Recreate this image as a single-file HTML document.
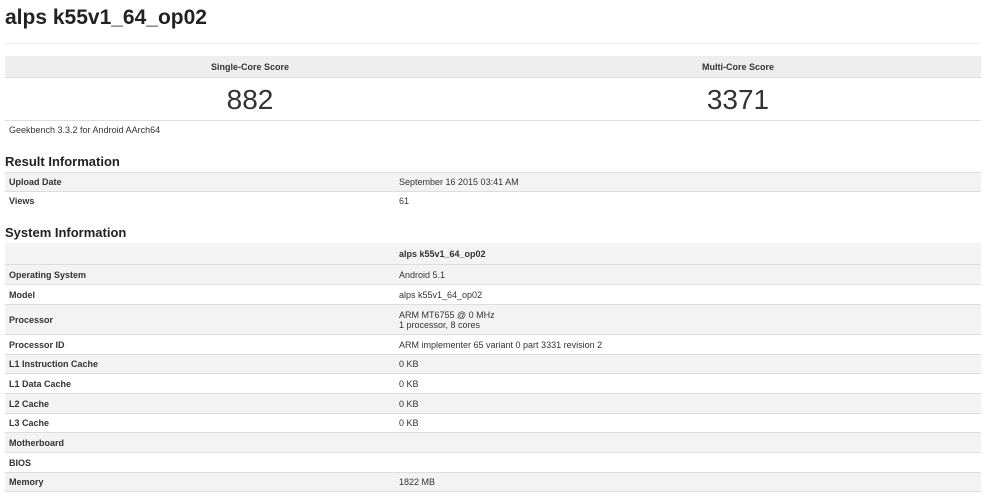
<!DOCTYPE html>
<html><head><style>
*{margin:0;padding:0;box-sizing:border-box}
body{width:1000px;height:496px;background:#fff;font-family:"Liberation Sans",Arial,sans-serif;color:#333;position:relative;overflow:hidden}
.a{position:absolute}
.h1{left:5px;top:6px;font-size:21px;font-weight:bold;color:#222}
.hr{left:5px;top:43px;width:976px;height:1px;background:#eee}
.sh{top:56px;height:22px;background:#eee;font-size:9px;font-weight:bold;line-height:22px;text-align:center;border-bottom:1px solid #ddd}
.num{top:83px;font-size:28px;text-align:center;color:#333;line-height:34px}
.h2{left:5px;font-size:13px;font-weight:bold;color:#222}
.row{left:5px;width:976px;border-top:1px solid #ddd;font-size:9px}
.row span{position:absolute;top:50%;transform:translateY(-50%)}
.k{left:4px;font-weight:bold}
.v{left:394px;line-height:10px}
.g{background:#f3f3f3}
</style></head><body>
<div class="a h1">alps k55v1_64_op02</div>
<div class="a hr"></div>
<div class="a sh" style="left:5px;width:490px">Single-Core Score</div>
<div class="a sh" style="left:495px;width:486px">Multi-Core Score</div>
<div class="a num" style="left:5px;width:490px">882</div>
<div class="a num" style="left:495px;width:486px">3371</div>
<div class="a" style="left:5px;top:120px;width:976px;height:1px;background:#ddd"></div>
<div class="a" style="left:9px;top:125px;font-size:9px">Geekbench 3.3.2 for Android AArch64</div>
<div class="a h2" style="top:154px">Result Information</div>
<div class="a row g" style="top:172px;height:19px"><span class="k">Upload Date</span><span class="v">September 16 2015 03:41 AM</span></div>
<div class="a row" style="top:191px;height:19px"><span class="k">Views</span><span class="v">61</span></div>
<div class="a h2" style="top:225px">System Information</div>
<div class="a row g" style="top:243px;height:21px;border-top:none"><span class="v" style="font-weight:bold">alps k55v1_64_op02</span></div>
<div class="a row g" style="top:264px;height:20px"><span class="k">Operating System</span><span class="v">Android 5.1</span></div>
<div class="a row" style="top:284px;height:20px"><span class="k">Model</span><span class="v">alps k55v1_64_op02</span></div>
<div class="a row g" style="top:304px;height:30px"><span class="k">Processor</span><span class="v">ARM MT6755 @ 0 MHz<br>1 processor, 8 cores</span></div>
<div class="a row" style="top:334px;height:20px"><span class="k">Processor ID</span><span class="v">ARM implementer 65 variant 0 part 3331 revision 2</span></div>
<div class="a row g" style="top:354px;height:19px"><span class="k">L1 Instruction Cache</span><span class="v">0 KB</span></div>
<div class="a row" style="top:373px;height:20px"><span class="k">L1 Data Cache</span><span class="v">0 KB</span></div>
<div class="a row g" style="top:393px;height:20px"><span class="k">L2 Cache</span><span class="v">0 KB</span></div>
<div class="a row" style="top:413px;height:19px"><span class="k">L3 Cache</span><span class="v">0 KB</span></div>
<div class="a row g" style="top:432px;height:20px"><span class="k">Motherboard</span></div>
<div class="a row" style="top:452px;height:20px"><span class="k">BIOS</span></div>
<div class="a row g" style="top:472px;height:20px;border-bottom:1px solid #ddd"><span class="k">Memory</span><span class="v">1822 MB</span></div>
</body></html>
